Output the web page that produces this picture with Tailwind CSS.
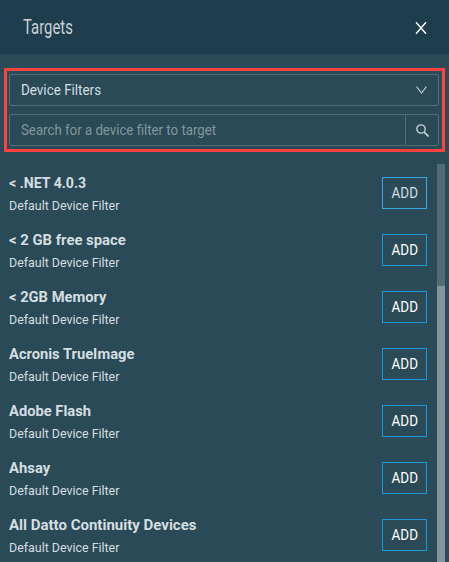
<!DOCTYPE html>
<html lang="en">
<head>
  <meta charset="UTF-8">
  <meta name="viewport" content="width=device-width, initial-scale=1.0">
  <script src="https://cdn.jsdelivr.net/npm/@tailwindcss/browser@4"></script>
  <title>Targets</title>
</head>
<body class="bg-[#294a56] text-[#d5dee1] font-[Roboto,'Liberation_Sans',sans-serif]">

  <div class="flex h-[562px] w-[449px] flex-col overflow-hidden">
    <header class="flex h-[54px] shrink-0 items-center justify-between bg-[#1e3d4d] pl-[23px] pr-[22px]">
      <h1 class="origin-left scale-x-[0.745] text-xl leading-7 text-[#c9d2d7]">Targets</h1>
      <button type="button" aria-label="Close">
        <svg class="mt-0.5 block h-3 w-3" viewBox="0 0 12 12" fill="none" stroke="#fff" stroke-width="1.4"><path d="M1 .2 11 11.8M11 .2 1 11.8"/></svg>
      </button>
    </header>

    <div class="mx-1 mt-3.5 flex h-[84px] w-[441px] shrink-0 flex-col gap-2 border-3 border-[#ff4141] py-[3px] pl-0.5 pr-[3px]">
      <div class="flex h-8 items-center justify-between rounded-xs border border-[#526d77] pl-[11px] pr-[11px]">
        <span class="origin-left scale-x-[0.96] text-sm">Device Filters</span>
        <svg class="block h-2 w-[11px]" viewBox="0 0 11 8" fill="none" stroke="#bcc8cc" stroke-width="1.2"><path d="M.6.6 5.5 7 10.4.6"/></svg>
      </div>
      <div class="flex h-8 rounded-xs border border-[#526d77]">
        <div class="flex flex-1 items-center pl-[11px] text-sm text-[#84969d]"><span class="origin-left scale-x-[0.946]">Search for a device filter to target</span></div>
        <div class="flex w-[33px] items-center justify-center border-l border-[#526d77]">
          <svg class="block h-[13px] w-[13px]" viewBox="0 0 13 13" fill="none" stroke="#ccd6da" stroke-width="1.3"><circle cx="5" cy="5" r="4.2"/><path d="m8 8 4.5 4.5" stroke-width="1.7"/></svg>
        </div>
      </div>
    </div>

    <div class="mt-3 flex h-[398px] shrink-0">
      <ul class="w-[437px] pl-[9px] pr-2.5">
        <li class="flex h-[57px] items-center justify-between">
          <div class="pt-0.5">
            <p class="origin-left scale-x-[0.94] text-[15px] leading-6 font-bold">&lt; .NET 4.0.3</p>
            <p class="origin-left scale-x-[0.955] text-[13px] leading-[22px]">Default Device Filter</p>
          </div>
          <button type="button" class="h-8 w-[45px] border border-[#3aa9e2] text-sm text-[#d5dee1]"><span class="inline-block scale-x-[0.96]">ADD</span></button>
        </li>
        <li class="flex h-[57px] items-center justify-between">
          <div class="pt-0.5">
            <p class="origin-left scale-x-[0.99] text-[15px] leading-6 font-bold">&lt; 2 GB free space</p>
            <p class="origin-left scale-x-[0.955] text-[13px] leading-[22px]">Default Device Filter</p>
          </div>
          <button type="button" class="h-8 w-[45px] border border-[#1c98d8] text-sm text-white"><span class="inline-block scale-x-[0.96]">ADD</span></button>
        </li>
        <li class="flex h-[57px] items-center justify-between">
          <div class="pt-0.5">
            <p class="origin-left scale-x-[0.98] text-[15px] leading-6 font-bold">&lt; 2GB Memory</p>
            <p class="origin-left scale-x-[0.955] text-[13px] leading-[22px]">Default Device Filter</p>
          </div>
          <button type="button" class="h-8 w-[45px] border border-[#1c98d8] text-sm text-white"><span class="inline-block scale-x-[0.96]">ADD</span></button>
        </li>
        <li class="flex h-[57px] items-center justify-between">
          <div class="pt-0.5">
            <p class="origin-left scale-x-[0.98] text-[15px] leading-6 font-bold">Acronis TrueImage</p>
            <p class="origin-left scale-x-[0.955] text-[13px] leading-[22px]">Default Device Filter</p>
          </div>
          <button type="button" class="h-8 w-[45px] border border-[#1c98d8] text-sm text-white"><span class="inline-block scale-x-[0.96]">ADD</span></button>
        </li>
        <li class="flex h-[57px] items-center justify-between">
          <div class="pt-0.5">
            <p class="origin-left scale-x-[0.98] text-[15px] leading-6 font-bold">Adobe Flash</p>
            <p class="origin-left scale-x-[0.955] text-[13px] leading-[22px]">Default Device Filter</p>
          </div>
          <button type="button" class="h-8 w-[45px] border border-[#1c98d8] text-sm text-white"><span class="inline-block scale-x-[0.96]">ADD</span></button>
        </li>
        <li class="flex h-[57px] items-center justify-between">
          <div class="pt-0.5">
            <p class="origin-left scale-x-[0.99] text-[15px] leading-6 font-bold">Ahsay</p>
            <p class="origin-left scale-x-[0.955] text-[13px] leading-[22px]">Default Device Filter</p>
          </div>
          <button type="button" class="h-8 w-[45px] border border-[#1c98d8] text-sm text-white"><span class="inline-block scale-x-[0.96]">ADD</span></button>
        </li>
        <li class="flex h-[57px] items-center justify-between">
          <div class="pt-0.5">
            <p class="text-[15px] leading-6 font-bold">All Datto Continuity Devices</p>
            <p class="origin-left scale-x-[0.955] text-[13px] leading-[22px]">Default Device Filter</p>
          </div>
          <button type="button" class="h-8 w-[45px] border border-[#1c98d8] text-sm text-white"><span class="inline-block scale-x-[0.96]">ADD</span></button>
        </li>
      </ul>
      <!-- scrollbar -->
      <div class="w-2 bg-[#536c76] pt-[122px]">
        <div class="h-full bg-[#84959c]"></div>
      </div>
    </div>
  </div>

</body>
</html>
